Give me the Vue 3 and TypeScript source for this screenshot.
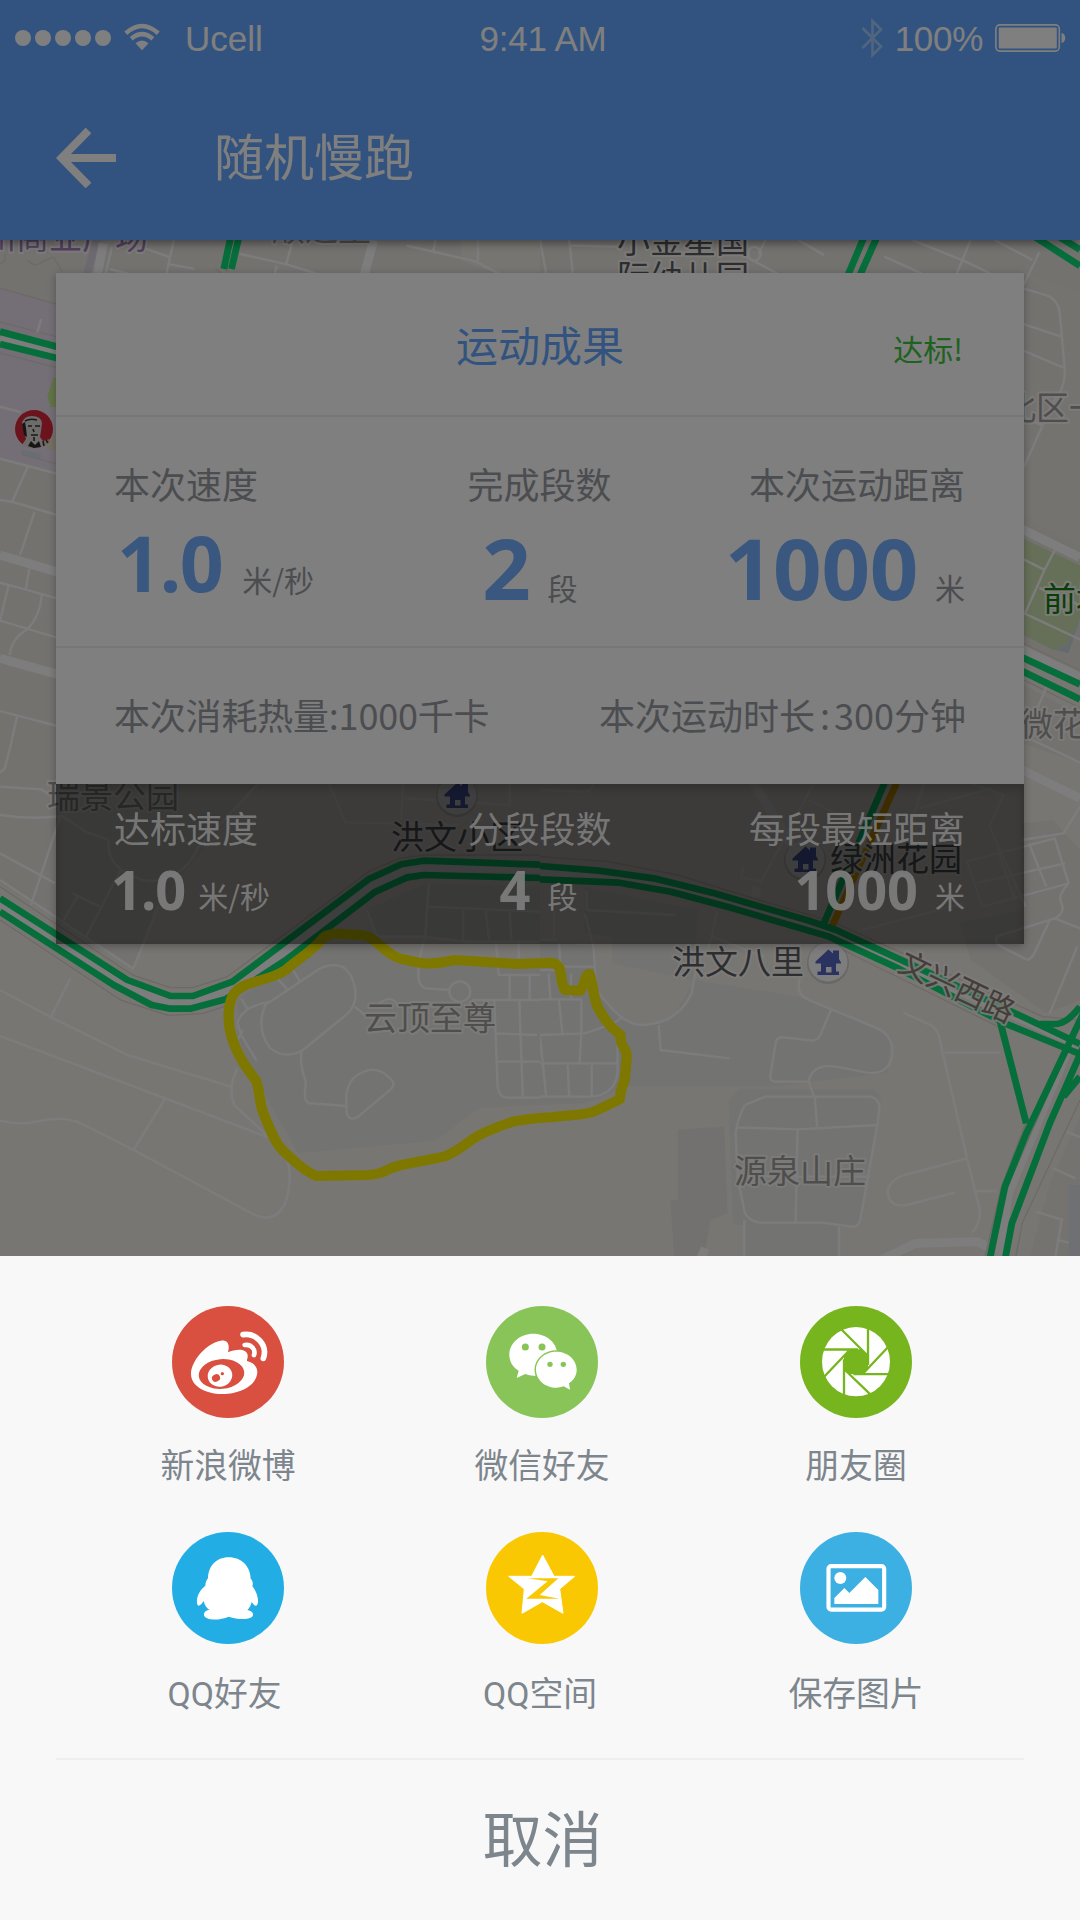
<script setup lang="ts">
interface Metric {
  label: string
  value: string
  unit: string
  align: 'start' | 'middle' | 'end'
}

interface Road {
  d: string
  kind: 'lane' | 'street' | 'edge' | 'green' | 'amber'
}

interface Tile {
  id: string
  transform: string
  areas: { d: string; fill: string }[]
  roads: Road[]
}

interface Place {
  name: string
  x: number
  y: number
  tone: 'dark' | 'soft' | 'mall' | 'park'
}

interface ShareTarget {
  id: string
  label: string
  color: string
  box: string
}

const results: Metric[] = [
  { label: '本次速度', value: '1.0', unit: '米/秒', align: 'start' },
  { label: '完成段数', value: '2', unit: '段', align: 'middle' },
  { label: '本次运动距离', value: '1000', unit: '米', align: 'end' },
]

const goals: Metric[] = [
  { label: '达标速度', value: '1.0', unit: '米/秒', align: 'start' },
  { label: '分段段数', value: '4', unit: '段', align: 'middle' },
  { label: '每段最短距离', value: '1000', unit: '米', align: 'end' },
]

const BLOCK = '#e7e6e3'
const ROUTE =
  'M680 760 C660 790 660 850 672 890 C690 950 720 990 742 1020 C756 1050 750 1080 765 1120 C785 1170 800 1215 830 1240 C870 1280 895 1300 920 1308 L1070 1305 C1130 1300 1110 1285 1180 1272 L1290 1250 C1350 1225 1360 1195 1420 1172 C1480 1145 1500 1140 1568 1134 L1600 1132 C1680 1122 1700 1126 1735 1110 L1800 1078 C1802 1040 1808 1040 1814 1020 L1820 950 C1818 910 1800 930 1802 885 C1760 850 1755 835 1735 800 C1722 770 1725 740 1712 702 C1695 705 1700 735 1685 752 L1640 750 C1622 720 1640 672 1600 668 L1500 672 L1320 660 C1240 678 1220 670 1160 655 C1110 640 1090 580 1040 585 C1000 582 960 575 940 592 C900 640 860 660 830 690 C780 725 710 720 680 760 Z'

const tiles: Tile[] = [
  {
    id: 'north-west',
    transform: 'translate(0 240) scale(0.34439)',
    areas: [
      { d: 'M0 0H1568V1568H0Z', fill: '#e6e4df' },
      { d: 'M0 140L170 188V670L0 632Z', fill: '#e9dfec' },
      { d: 'M292 0L262 100H240L270 0Z', fill: '#ddd3e0' },
      { d: 'M1340 0H1568V100H1450L1340 60Z', fill: '#efebe2' },
      { d: 'M170 400H155L137 455L148 485H170Z', fill: '#c6e890' },
      { d: 'M62 608L120 622L116 634L62 622Z', fill: '#d0dce6' },
      { d: 'M130 570L170 562V615L130 605Z', fill: '#e9e0cb' },
    ],
    roads: [
      { d: 'M0 70L15 60V40', kind: 'edge' },
      { d: 'M82 60L95 70Q110 76 125 62L155 50L180 90', kind: 'edge' },
      { d: 'M0 140L170 188', kind: 'edge' },
      { d: 'M62 622L165 650', kind: 'edge' },
      { d: 'M300 10L283 100', kind: 'street' },
      { d: 'M325 20L306 100M318 84L370 98M380 10L493 50M505 0L483 98M490 70L565 84', kind: 'lane' },
      { d: 'M695 40L830 70L920 98M850 0L832 68M803 75L798 98', kind: 'lane' },
      { d: 'M1085 0L1058 100', kind: 'street' },
      { d: 'M1180 16L1380 62L1450 98M1265 0L1258 32M1388 0V60', kind: 'lane' },
      { d: 'M0 285L170 330', kind: 'street' },
      { d: 'M0 238L170 282M0 328L170 372', kind: 'edge' },
      { d: 'M120 230L108 268', kind: 'lane' },
      { d: 'M0 484L60 500M0 635L170 680M80 660L35 760L0 755M35 760L170 800M100 790L58 915', kind: 'lane' },
      { d: 'M0 915L170 965M0 1215L170 1262', kind: 'street' },
      { d: 'M85 955L75 1015L0 995M75 1015L170 1042M25 1003L0 1105L170 1156M122 1030Q115 1095 80 1130Q35 1155 28 1205', kind: 'lane' },
      { d: 'M0 1368L170 1412M50 1382L15 1535L0 1550', kind: 'lane' },
      { d: 'M670 -10L650 84M694 -10L672 84', kind: 'green' },
      { d: 'M0 266L170 311M0 302L170 344', kind: 'green' },
      { d: 'M625 84L645 98M655 86L662 92', kind: 'edge' },
    ],
  },
  {
    id: 'north-east',
    transform: 'translate(540 240) scale(0.34439)',
    areas: [
      { d: 'M0 0H1568V1568H0Z', fill: '#e6e4df' },
      { d: 'M1400 90L1568 150V890L1400 800L1400 650L1470 530L1525 400L1510 200Z', fill: '#eae7e0' },
      { d: 'M1400 1170L1568 1250V1380L1400 1290Z', fill: '#f0ece4' },
      { d: 'M1400 865L1568 945V1100L1530 1175L1490 1190L1400 1145Z', fill: '#cddfb0' },
      { d: 'M1568 1100L1535 1200L1490 1188L1530 1175Z', fill: '#c9d4dc' },
    ],
    roads: [
      { d: 'M0 0L18 98M85 0L95 98M90 16L240 20M750 0L825 44M655 0L635 40M600 50L690 98', kind: 'lane' },
      { d: 'M620 20a18 20 0 1 0 5 0Z', kind: 'lane' },
      { d: 'M1000 48L1110 98M1080 0L1230 60L1310 98M1250 0L1210 98M1320 0L1430 58M1450 35L1405 130', kind: 'lane' },
      { d: 'M1400 140L1470 160Q1508 175 1510 220L1524 380Q1525 430 1490 470L1405 660M1400 243L1512 280M1400 320L1518 370M1460 540L1400 510', kind: 'lane' },
      { d: 'M1400 840L1568 922', kind: 'street' },
      { d: 'M1400 925L1465 958L1408 1085L1568 1160M1495 900L1465 958M1450 1010L1568 1060', kind: 'lane' },
      { d: 'M1400 1190L1568 1270', kind: 'street' },
      { d: 'M1400 1170L1568 1250M1400 1275L1568 1358', kind: 'edge' },
      { d: 'M1470 1300L1440 1370M1400 1440L1568 1520', kind: 'lane' },
      { d: 'M1400 1540L1568 1620', kind: 'street' },
      { d: 'M950 -30L895 100M988 -30L930 100', kind: 'green' },
      { d: 'M1420 -20L1568 75M1490 -20L1568 28', kind: 'green' },
      { d: 'M1400 1212L1568 1290M1400 1252L1568 1334', kind: 'green' },
    ],
  },
  {
    id: 'south-west',
    transform: 'translate(0 740) scale(0.34439 0.33333)',
    areas: [
      { d: 'M0 0H1568V1560H0Z', fill: '#f0ede6' },
      { d: 'M0 0H750V130L450 500L390 690L0 430Z', fill: '#e6e4df' },
      { d: 'M1060 510L1240 430L1568 440V610L1090 590Z', fill: BLOCK },
      { d: 'M690 780L930 590L1100 600L1160 655L1568 680V1095L1390 1105L1265 1202L865 1240L740 1010L690 890Z', fill: BLOCK },
    ],
    roads: [
      { d: 'M35 0L14 85L0 98M0 140L120 148L170 180M0 225Q90 240 180 228L250 275L315 300M175 230L90 495M0 340L160 430M0 420L385 685M750 130L570 330M315 300Q310 370 370 400Q430 440 500 410Q560 370 575 320', kind: 'lane' },
      { d: 'M460 500L385 690M350 390L250 590M210 460L290 500M225 470L185 540M955 132L1003 247L1330 255M1170 132L1165 240M1175 175L1480 195M1480 132V200', kind: 'lane' },
      { d: 'M0 750L148 832L370 945L670 1040M205 714L148 832M0 888L480 1075L785 1195M480 1075L388 1230M0 1142Q60 1158 120 1142Q190 1128 235 1150L388 1230L740 1425Q800 1450 828 1390Q850 1320 835 1260M785 1195L680 1095Q660 1040 690 985', kind: 'lane' },
      { d: 'M785 785Q700 800 690 850L700 885L745 962M700 775L718 805M690 900L705 870M805 715L835 750M850 690L870 722M770 795L930 685Q1010 650 1030 740Q1040 790 1010 820L880 930Q830 960 785 925Q750 880 762 820Z', kind: 'lane' },
      { d: 'M1030 800L1060 825M1100 790Q1140 760 1155 800M875 935Q870 975 888 1025L885 1070Q890 1092 905 1090L1005 1098M1005 1070Q1010 1010 1060 994Q1100 975 1142 1025Q1145 1040 1130 1052L1040 1130Q1015 1145 1007 1122Z', kind: 'lane' },
      { d: 'M1245 430L1235 590L1215 665V715Q1220 742 1235 745L1305 750M1305 750A30 30 0 1 1 1365 760A30 30 0 1 1 1305 750M1065 510L1095 590H1230L1350 605H1568M1240 500L1568 515M1345 510V600M1410 512L1420 600M1480 515L1485 600', kind: 'lane' },
      { d: 'M1440 600L1448 705H1568M1505 600L1508 680M1480 705V780M1538 705V780M1370 780H1568M1435 780L1445 1040Q1450 1075 1475 1073H1568M1508 780L1518 1070M1440 880L1560 885M1445 965H1568', kind: 'lane' },
      { d: 'M0 490L370 735L490 790H555L690 740L1080 435L1180 385L1230 385H1568', kind: 'street' },
      { d: 'M0 440L385 705L495 743H560L660 710L1070 395L1160 355L1230 345H1568M0 540L350 780L490 827L590 820L680 790', kind: 'edge' },
      { d: 'M0 475L370 720L495 768H560L675 725L1070 418L1165 373L1230 362L1568 374', kind: 'green' },
      { d: 'M0 515L330 735L440 795L495 806H552L655 778L830 660L1090 455L1180 413L1230 405L1568 414', kind: 'green' },
    ],
  },
  {
    id: 'south-east',
    transform: 'translate(540 740) scale(0.34439 0.33333)',
    areas: [
      { d: 'M0 0H1568V1560H0Z', fill: '#f0ede6' },
      { d: 'M1400 0H1568V70L1400 10ZM1400 250L1490 240L1568 330V780L1470 820L1250 660L1220 550L1400 510Z', fill: '#e6e4df' },
      { d: 'M130 440L460 510L445 720L210 670V590L130 580Z', fill: BLOCK },
      { d: 'M0 600L160 620L170 760L240 840Q300 870 380 840L450 720L750 770L850 810L1020 890L1010 1000L780 1025L700 1038H260L130 1090L0 1095Z', fill: BLOCK },
      { d: 'M580 1048H970L990 1070L980 1150L930 1460H870V1560H590V1455H560L548 1080Z', fill: BLOCK },
      { d: 'M400 1168L535 1160L545 1420L495 1440L475 1560H390L378 1380H400Z', fill: '#e4e3e1' },
      { d: 'M1568 1130L1480 1330L1420 1560H1568Z', fill: '#e9e6e0' },
      { d: 'M1535 1335H1568V1560H1535Z', fill: '#dfe0e6' },
    ],
    roads: [
      { d: 'M0 150L130 155Q150 155 155 130M795 130L640 430M780 180L900 240M1115 130L1085 225M1250 130L1345 165L1305 260L1410 500M1100 205L1310 145M590 380L585 412L640 425', kind: 'lane' },
      { d: 'M620 130L740 330M625 470L630 440', kind: 'street' },
      { d: 'M1430 0L1568 68M1568 200L1520 280L1400 300M1240 365L1495 295L1535 430L1285 500ZM1330 335L1380 480M1420 310L1470 440M1265 430L1525 370M1535 430Q1500 470 1515 490Q1525 520 1495 535L1568 565M1495 535L1325 590Q1320 610 1340 620L1415 660Q1430 655 1440 630L1480 540M1560 620L1480 820', kind: 'lane' },
      { d: 'M135 450V510L393 525M515 515L490 620M500 590L650 650M938 570L1230 490M40 520V600M55 610L60 680H160M0 600H50M130 520L155 620L165 750Q240 860 300 855Q400 850 440 760L460 650M345 855L350 930L550 955', kind: 'lane' },
      { d: 'M0 690H60M25 700L30 775M90 700V775M0 778H120V880L115 970M55 780L65 880M0 885L130 880L215 850L240 830M0 890L18 1070M0 970H225M80 975L85 1070M150 975V1070M225 870V1000Q215 1070 140 1070H0', kind: 'lane' },
      { d: 'M755 715Q740 760 780 780L980 865Q1030 890 1022 950Q1010 1005 950 998L860 980Q790 970 780 1025H680Q665 1020 670 1000L685 905Q690 890 710 892L790 902Q812 900 820 870L845 810', kind: 'lane' },
      { d: 'M780 1025L798 1075L805 1160M595 1095L655 1070H960Q990 1080 985 1110L980 1150L930 1440Q925 1462 905 1460L820 1448H640Q610 1445 595 1420L575 1320L568 1180Q575 1130 595 1095M570 1162L748 1168L980 1155M748 1168L742 1445M570 1310H960M593 1440V1560M868 1460V1560', kind: 'lane' },
      { d: 'M1055 818L1140 858Q1160 875 1165 920L1240 1255L1275 1400Q1285 1440 1255 1478M1175 938H1335M1240 1255L1050 1308Q1010 1325 1010 1360Q1015 1400 1060 1396L1205 1358M1265 1353H1325', kind: 'lane' },
      { d: 'M1568 1192L1530 1175M1490 1285L1555 1315M1440 1415L1520 1440M1500 1500L1535 1508M1515 1440L1495 1560', kind: 'lane' },
      { d: 'M480 1525L465 1560M990 1560L1090 1510L1270 1505L1310 1525M1400 90L1568 175', kind: 'street' },
      { d: 'M0 400L230 412L420 460L840 575L1060 680L1568 915', kind: 'street' },
      { d: 'M0 350L200 365L400 405L620 475L850 545L1460 830L1568 840M880 630L1330 860L1410 1150L1340 1340L1290 1560', kind: 'edge' },
      { d: 'M1545 900L1360 1360L1330 1560', kind: 'street' },
      { d: 'M1525 945L1345 1370L1315 1560M1568 1080L1400 1450L1380 1560', kind: 'edge' },
      { d: 'M1000 130L820 560', kind: 'green' },
      { d: 'M1035 130L845 565', kind: 'amber' },
      { d: 'M0 378L170 392L330 415L500 458L780 542L860 570L1060 665L1370 815L1568 912', kind: 'green' },
      { d: 'M0 418L230 428L380 455L560 505L840 590L1040 685L1350 850L1568 942', kind: 'green' },
      { d: 'M1335 840L1412 1150M1568 800Q1530 850 1500 852H1450M1580 815L1412 1180L1350 1340L1305 1560M1580 915L1480 1150L1370 1450L1350 1560M1568 1010L1520 1070', kind: 'green' },
    ],
  },
]

const places: Place[] = [
  { name: '州商业广场', x: -17, y: 249, tone: 'mall' },
  { name: '顺达里', x: 272, y: 241, tone: 'soft' },
  { name: '小金星国', x: 617, y: 253, tone: 'dark' },
  { name: '际幼儿园', x: 617, y: 289, tone: 'dark' },
  { name: '北区一', x: 1003, y: 420, tone: 'soft' },
  { name: '前埔', x: 1043, y: 611, tone: 'park' },
  { name: '微花', x: 1020, y: 736, tone: 'soft' },
  { name: '瑞景公园', x: 47, y: 808, tone: 'soft' },
  { name: '洪文小区', x: 391, y: 849, tone: 'dark' },
  { name: '云顶至尊', x: 364, y: 1030, tone: 'soft' },
  { name: '洪文八里', x: 672, y: 974, tone: 'dark' },
  { name: '绿洲花园', x: 830, y: 871, tone: 'dark' },
  { name: '源泉山庄', x: 734, y: 1183, tone: 'soft' },
]

const houses = [
  { x: 457, y: 795 },
  { x: 805, y: 859 },
  { x: 828, y: 962 },
]

const targets: ShareTarget[] = [
  { id: 'weibo', label: '新浪微博', color: '#d95040', box: '96 78 336 336' },
  { id: 'wechat', label: '微信好友', color: '#88c457', box: '136 78 336 336' },
  { id: 'moments', label: '朋友圈', color: '#76b51d', box: '120 78 336 336' },
  { id: 'qq', label: 'QQ好友', color: '#22aee5', box: '96 67 336 336' },
  { id: 'qzone', label: 'QQ空间', color: '#f9c803', box: '138 66 336 336' },
  { id: 'album', label: '保存图片', color: '#3cb0e3', box: '119 66 336 336' },
]
</script>

<template>
  <div class="screen">
    <header class="top">
      <div class="status">
        <div class="status-left">
          <span class="signal"><i v-for="n in 5" :key="n" /></span>
          <svg class="wifi" viewBox="0 0 36 28">
            <path d="M1.8 10.2Q18-4.2 34.2 10.2" />
            <path d="M7.2 15.8Q18 6.6 28.8 15.8" />
            <path class="solid" d="M11.5 20.3Q18 14.6 24.5 20.3L18 27.2Z" />
          </svg>
          <span>Ucell</span>
        </div>
        <span class="clock">9:41 AM</span>
        <div class="status-right">
          <svg class="bluetooth" viewBox="0 0 22 40">
            <path d="M1.5 10L20 28.5L11.5 37V3L20 11.5L1.5 30" />
          </svg>
          <span class="charge">100%</span>
          <svg class="battery" viewBox="0 0 72 28">
            <rect class="shell" x="0.9" y="0.9" width="63.4" height="26.2" rx="4" />
            <rect x="3.8" y="3.4" width="58" height="21.2" rx="1" />
            <path d="M66.5 9C71.500 9.5 71.500 18.500 66.500 19Z" />
          </svg>
        </div>
      </div>
      <div class="bar">
        <svg class="back" viewBox="0 0 60 60"><path d="M32.500 2.500L5.500 30L32.500 57.500M5 30H60" /></svg>
        <h1>随机慢跑</h1>
      </div>
    </header>

    <main class="stage">
      <svg class="map" viewBox="0 240 1080 1016">
        <defs>
          <clipPath id="tile-clip"><rect width="1568" height="1568" /></clipPath>
        </defs>
        <g v-for="tile in tiles" :key="tile.id" :transform="tile.transform" clip-path="url(#tile-clip)">
          <path v-for="(area, i) in tile.areas" :key="`a${i}`" :d="area.d" :fill="area.fill" />
          <path v-for="(road, i) in tile.roads" :key="`r${i}`" :d="road.d" class="road" :class="road.kind" />
        </g>
        <path class="route" transform="translate(0 740) scale(0.34439 0.33333)" :d="ROUTE" />
        <g v-for="(h, i) in houses" :key="i" :transform="`translate(${h.x} ${h.y})`">
          <circle class="pin-shadow" cy="1" r="21" />
          <circle class="pin" r="19.500" />
          <path
            class="house"
            d="M0.500-12.500L5-8.500V-11.500H11V-3L13 0.500V1.500H8V9.500H11V13H-10.500V9.500H-7V1.500H-12.500V-0.500ZM-2 5V10.500H3.500V5Z"
            fill-rule="evenodd"
          />
        </g>
        <g transform="translate(34 429)">
          <circle r="20" fill="#f3dfe1" />
          <circle r="19" fill="#d8283c" />
          <path d="M-12 16L-8 10L-10 2L-12-5Q-11-13-2-13Q7-13 8-6L7 2L6 8L9 12L16 10Q10 19 0 19.500Q-7 19.500-12 16Z" fill="#d9d8d4" />
          <path d="M-12-5L-9-7L-8-1L-7 8L-10 6ZM-6 17L-3 12L1 16L5 12L7 18L0 19Z" fill="#2f2926" />
          <path
            d="M-9-8Q-4-11 3-9M-6-3L-2-3M1-3L6-3M-1 0L0 3M-3 6H4M0 8V12M9 12L10 17M12 11L14 14"
            stroke="#3a3330"
            stroke-width="1.600"
            fill="none"
          />
        </g>
        <text v-for="p in places" :key="p.name" class="place" :class="p.tone" :x="p.x" :y="p.y">{{ p.name }}</text>
        <text class="place street-name" transform="translate(957 987) rotate(25.500)" text-anchor="middle" y="11">文兴西路</text>
      </svg>

      <section class="card">
        <div class="card-head">
          <h2>运动成果</h2>
          <span class="passed">达标!</span>
        </div>
        <div class="metrics results">
          <div v-for="m in results" :key="m.label" class="metric" :class="m.align">
            <span class="label">{{ m.label }}</span>
            <span class="reading"><b>{{ m.value }}</b><em>{{ m.unit }}</em></span>
          </div>
        </div>
        <div class="details">
          <span class="calories">本次消耗热量:1000千卡</span>
          <span>本次运动时长<i>:</i>300分钟</span>
        </div>
        <div class="metrics goals">
          <div v-for="m in goals" :key="m.label" class="metric" :class="m.align">
            <span class="label">{{ m.label }}</span>
            <span class="reading"><b>{{ m.value }}</b><em>{{ m.unit }}</em></span>
          </div>
        </div>
      </section>
    </main>

    <div class="scrim" />

    <section class="sheet">
      <div class="targets">
        <button v-for="t in targets" :key="t.id" class="target" :class="t.id" type="button">
          <svg class="badge" :viewBox="t.box" :style="{ backgroundColor: t.color, color: t.color }">
            <g v-if="t.id === 'weibo'">
              <path d="M153 282C153 243 200 188 243 182C264 180 270 194 264 217C285 207 319 203 323 225C324 234 320 240 321 243C341 248 352 260 352 277C350 316 300 342 247 342C195 342 153 318 153 282Z" />
              <ellipse class="tint" cx="244.500" cy="282" rx="68.500" ry="44.500" transform="rotate(-5 244 282)" />
              <ellipse cx="240" cy="287" rx="37" ry="33" transform="rotate(-12 240 287)" />
              <ellipse class="tint" cx="228" cy="294" rx="12.500" ry="11" transform="rotate(-25 228 294)" />
              <circle class="tint" cx="247" cy="281" r="5" />
              <path class="wave" stroke-width="17" d="M309 164C350 158 384 196 370 235" />
              <path class="wave" stroke-width="14" d="M314 195C333 192 348 208 342 225" />
            </g>
            <g v-else-if="t.id === 'wechat'">
              <path d="M278 161C318 161 350 189 350 224C350 259 318 287 278 287Q266 287 254 282L228 294L234 272C216 261 206 244 206 224C206 189 238 161 278 161Z" />
              <circle class="tint" cx="254" cy="201" r="10.500" /><circle class="tint" cx="304" cy="201" r="10.500" />
              <ellipse class="tint" cx="347" cy="269" rx="65.500" ry="58" />
              <path d="M347 215C381 215 408 239 408 269C408 287 399 300 385 310L388 329L369 319Q358 323 347 323C313 323 286 299 286 269C286 239 313 215 347 215Z" />
              <circle class="tint" cx="328" cy="253" r="8" /><circle class="tint" cx="368" cy="253" r="8" />
            </g>
            <g v-else-if="t.id === 'moments'">
              <ellipse cx="288" cy="245" rx="102" ry="104" />
              <path class="tint" d="M302 208L324 229V264L307 282H267L252 267V227L271 208Z" />
              <path class="blade" d="M240 144L324 228M324 135V255M390 195L308 282M400 282.500H280M338 350L252 267M252 355V238M186 297L266 213M180 208.500H294" />
            </g>
            <path
              v-else-if="t.id === 'qq'"
              d="M266 143C305 143 331 170 332 207C338 213 340 222 337 229C348 243 355 262 354 276C353 292 344 292 335 277C333 287 328 296 322 301C335 303 340 309 339 316C337 331 296 331 266 321C237 334 193 332 192 315C192 306 200 301 209 301C200 296 194 287 191 274C181 290 173 292 171 281C169 262 178 242 196 228C196 220 199 212 204 206C205 170 228 143 266 143Z"
            />
            <g v-else-if="t.id === 'qzone'">
              <path class="star" d="M308 135L342 199H404L359 237L369 310L307 275L246 310L253 237L206 199H275Z" />
              <path class="tint" d="M263 204.500H355L299 255L358 266.500H259L323 214Z" />
            </g>
            <g v-else>
              <rect class="frame" x="204.500" y="168.500" width="167" height="130.500" rx="8" />
              <circle cx="240" cy="204" r="18" />
              <path d="M222 282V264L252 234L267 249L315 201L354 240V282Z" />
            </g>
          </svg>
          <span>{{ t.label }}</span>
        </button>
      </div>
      <button class="cancel" type="button">取消</button>
    </section>
  </div>
</template>

<style>
body {
  margin: 0;
}
</style>

<style scoped>
.screen {
  position: relative;
  display: flex;
  flex-direction: column;
  width: 1080px;
  height: 1920px;
  overflow: hidden;
  font-family: 'Noto Sans CJK SC', sans-serif;
}

h1,
h2 {
  margin: 0;
  font-weight: 400;
}

em,
i {
  font-style: normal;
}

button {
  padding: 0;
  border: 0;
  background: none;
  font: inherit;
  color: #7d858d;
}

.top {
  position: relative;
  z-index: 1;
  flex: 0 0 240px;
  background: #64a7ff;
  box-shadow: 0 3px 9px rgba(0, 0, 0, 0.45);
  color: #fff;
}

.status {
  display: grid;
  grid-template-columns: 1fr auto 1fr;
  align-items: center;
  height: 76px;
  padding: 0 13px 0 15px;
  font: 35px/38px 'Liberation Sans', Arial, sans-serif;
}

.status span:not(.signal) {
  padding-top: 2px;
}

.status-left,
.status-right,
.signal {
  display: flex;
  align-items: center;
}

.status-right {
  justify-content: flex-end;
}

.signal {
  gap: 4px;
}

.signal i {
  width: 16px;
  height: 16px;
  border-radius: 50%;
  background: #fff;
}

.wifi {
  width: 36px;
  height: 28px;
  margin: 0 25px 2px 13px;
  fill: none;
  stroke: #fff;
  stroke-width: 4.5;
}

.wifi .solid {
  fill: #fff;
  stroke: none;
}

.clock {
  padding-left: 4px;
  letter-spacing: -0.2px;
}

.bluetooth {
  width: 22px;
  height: 40px;
  margin-right: 12px;
  fill: none;
  stroke: #fff;
  stroke-width: 2.6;
  opacity: 0.4;
}

.charge {
  letter-spacing: -0.3px;
}

.battery {
  width: 72px;
  height: 28px;
  margin-left: 12px;
  fill: #fff;
}

.battery .shell {
  fill: none;
  stroke: #fff;
  stroke-width: 1.6;
}

.bar {
  display: flex;
  align-items: center;
  height: 164px;
  padding-left: 56px;
}

.back {
  width: 60px;
  height: 60px;
  fill: none;
  stroke: #fff;
  stroke-width: 8;
}

.bar h1 {
  margin: 0 0 9px 98px;
  font-size: 50px;
  line-height: 50px;
}

.stage {
  position: relative;
  flex: 0 0 1016px;
  box-sizing: border-box;
  padding: 33px 56px 0;
}

.map {
  position: absolute;
  inset: 0;
  width: 1080px;
  height: 1016px;
}

.road {
  fill: none;
  stroke-linejoin: round;
}

.lane {
  stroke: #f9f9fb;
  stroke-width: 7;
}

.street {
  stroke: #fbfafa;
  stroke-width: 26;
}

.edge {
  stroke: #dcd4cb;
  stroke-width: 4;
}

.green {
  stroke: #0cdc76;
  stroke-width: 20;
}

.amber {
  stroke: #f5b000;
  stroke-width: 20;
}

.route {
  fill: none;
  stroke: #fff000;
  stroke-width: 30;
  stroke-linejoin: round;
}

.pin-shadow {
  fill: rgba(0, 0, 0, 0.12);
}

.pin {
  fill: #fbfbfb;
}

.house {
  fill: #5566c0;
}

.place {
  font-size: 33px;
  paint-order: stroke;
  stroke: rgba(250, 249, 247, 0.85);
  stroke-width: 4px;
  stroke-linejoin: round;
}

.place.dark {
  fill: #5c5c62;
}

.place.soft {
  fill: #9e9c99;
}

.place.mall {
  fill: #a77bc0;
}

.place.park {
  fill: #147a10;
}

.place.street-name {
  font-size: 31px;
  fill: #8d7a70;
}

.card {
  position: relative;
  display: flex;
  flex-direction: column;
  height: 671px;
  box-shadow: 0 2px 8px rgba(0, 0, 0, 0.28);
}

.card-head {
  display: grid;
  grid-template-columns: 1fr auto 1fr;
  align-items: center;
  height: 142px;
  padding: 0 61px;
  border-bottom: 2px solid #efefef;
  background: #fff;
}

.card-head h2 {
  grid-column: 2;
  font-size: 42px;
  line-height: 42px;
  color: #64a7ff;
}

.passed {
  justify-self: end;
  padding-top: 9px;
  font-size: 30px;
  line-height: 30px;
  color: #3fc33f;
}

.metrics {
  display: grid;
  grid-template-columns: 1fr auto 1fr;
  padding: 0 59px 0 58px;
}

.metric {
  display: flex;
  flex-direction: column;
}

.metric.middle,
.metric.end {
  align-items: flex-end;
}

.label {
  font-size: 36px;
  line-height: 36px;
  white-space: nowrap;
}

.reading {
  display: flex;
  align-items: baseline;
  white-space: nowrap;
}

.reading b {
  font-family: 'Open Sans', 'Noto Sans', sans-serif;
  font-weight: 700;
}

.reading em {
  margin-left: 17px;
  font-size: 30px;
  line-height: 30px;
}

.middle .reading {
  padding-right: 34px;
}

.results {
  height: 182px;
  padding-top: 48px;
  border-bottom: 2px solid #efefef;
  background: #fff;
  color: #989ba1;
}

.results .reading {
  margin-top: 23px;
}

.results b {
  font-size: 85px;
  line-height: 86px;
  letter-spacing: -0.3px;
  color: #74b0ff;
}

.results .start b {
  margin-left: 3px;
  font-size: 77px;
  line-height: 78px;
  letter-spacing: -1.6px;
}

.results .start em {
  margin-left: 20px;
  padding-bottom: 1px;
}

.details {
  display: flex;
  justify-content: space-between;
  align-items: center;
  height: 132px;
  padding: 0 58px 5px;
  background: #fff;
  font-size: 36px;
  line-height: 36px;
  color: #989ba1;
}

.details .calories {
  letter-spacing: -0.2px;
}

.details i {
  margin: 0 4px 0 5px;
}

.goals {
  height: 135px;
  padding-top: 25px;
  background: rgba(0, 0, 0, 0.5);
  box-shadow: inset 0 4px 8px rgba(0, 0, 0, 0.2);
  color: rgba(255, 255, 255, 0.9);
}

.goals .reading {
  margin-top: 17px;
}

.goals b {
  font-size: 54px;
  line-height: 54px;
}

.goals em {
  transform: translateY(-2px);
}

.goals .start b {
  margin-left: -3px;
  letter-spacing: -1px;
}

.goals .start em {
  margin-left: 13px;
}

.scrim {
  position: absolute;
  z-index: 2;
  inset: 0 0 664px;
  background: rgba(0, 0, 0, 0.5);
}

.sheet {
  position: relative;
  z-index: 3;
  flex: 0 0 664px;
  display: flex;
  flex-direction: column;
  box-sizing: border-box;
  padding: 50px 56px 0;
  background: #f8f8f8;
}

.targets {
  display: grid;
  grid-template-columns: repeat(3, 314px);
  grid-template-rows: 226px 226px;
  padding: 0 15px;
  border-bottom: 2px solid #efefef;
}

.target {
  display: flex;
  flex-direction: column;
  align-items: center;
  font-family: Roboto, 'Noto Sans CJK SC', sans-serif;
  font-size: 33.8px;
  line-height: 34px;
}

.badge {
  width: 112px;
  height: 112px;
  margin-bottom: 32px;
  border-radius: 50%;
  fill: #fff;
}

.qq .badge,
.qzone .badge,
.album .badge {
  margin-bottom: 34px;
}

.qq span {
  margin-right: 7px;
}

.qzone span {
  margin-right: 4px;
}

.tint {
  fill: currentColor;
}

.wave {
  fill: none;
  stroke: #fff;
  stroke-linecap: round;
}

.blade {
  fill: none;
  stroke: currentColor;
  stroke-width: 7;
}

.star {
  stroke: #fff;
  stroke-width: 3;
  stroke-linejoin: round;
}

.frame {
  fill: none;
  stroke: #fff;
  stroke-width: 12.5;
}

.cancel {
  flex: 1;
  padding: 0 0 8px 5px;
  font-size: 60px;
  line-height: 60px;
}
</style>
